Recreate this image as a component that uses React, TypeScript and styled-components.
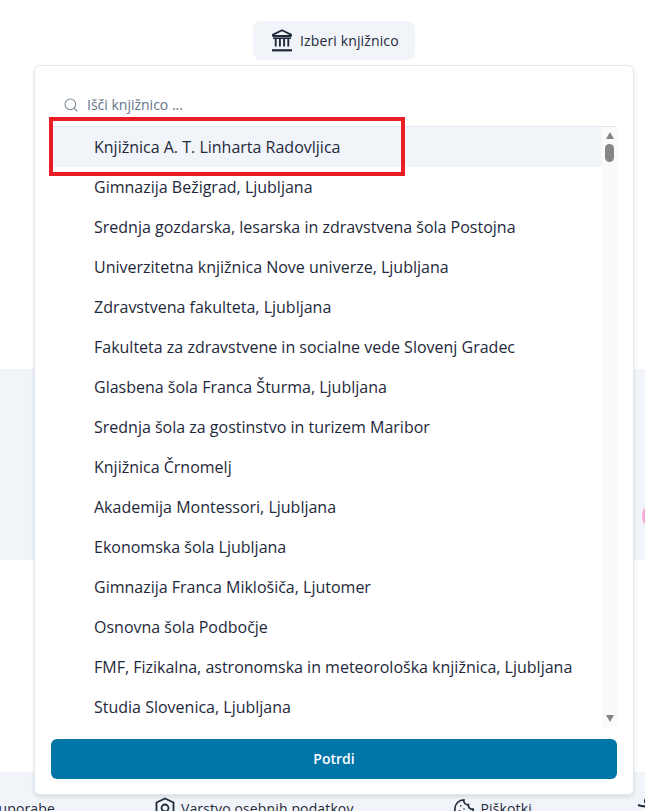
import React from "react";
import styled, { createGlobalStyle } from "styled-components";
import { Search, Cookie } from "lucide-react";

const Global = createGlobalStyle`
  html, body { margin: 0; padding: 0; background: #fff; }
  body { font-family: "Open Sans", "Noto Sans", sans-serif; color: #1e293b; }
`;

const Page = styled.div`
  position: relative;
  width: 645px;
  height: 811px;
  overflow: hidden;
  background: #fff;
  display: flex;
  flex-direction: column;
`;
const Top = styled.div`
  display: flex;
  justify-content: center;
  padding: 21px 0 0 23px;
  height: 369px;
  box-sizing: border-box;
  flex: none;
`;
const LibraryButton = styled.button`
  display: flex;
  align-items: center;
  gap: 8px;
  width: 162px;
  height: 39px;
  padding: 0 0 0 19px;
  border: 0;
  border-radius: 8px;
  background: #f1f5f9;
  color: #1e293b;
  font: 400 14px "Open Sans", "Noto Sans", sans-serif;
  letter-spacing: 0.13px;
`;
const Band = styled.div`
  height: 191px;
  background: #f1f5f9;
  flex: none;
`;
const Spacer = styled.div`
  flex: 1;
`;
const Footer = styled.div`
  height: 39px;
  background: #f1f5f9;
  display: flex;
  gap: 100px;
  padding-top: 26px;
  box-sizing: border-box;
  font-size: 14px;
  letter-spacing: 0.13px;
  white-space: nowrap;
  overflow: hidden;
  flex: none;
`;
const FooterItem = styled.div<{ $offset?: number }>`
  display: flex;
  align-items: center;
  gap: 6px;
  height: 21px;
  flex: none;
  margin-left: ${(p) => p.$offset ?? 0}px;
  color: #1e293b;
`;
const Panel = styled.div`
  position: absolute;
  left: 34px;
  top: 65px;
  width: 600px;
  height: 730px;
  box-sizing: border-box;
  background: #fff;
  border: 1px solid #e2e8f0;
  border-radius: 6px;
  box-shadow: 0 2px 4px rgba(15, 23, 42, 0.12);
  padding: 0 16px 15px;
  display: flex;
  flex-direction: column;
`;
const SearchRow = styled.div`
  display: flex;
  align-items: center;
  gap: 8px;
  height: 61px;
  padding: 17px 0 0 12px;
  box-sizing: border-box;
  color: #64748b;
  font-size: 14px;
  border-bottom: 1px solid #e2e8f0;
  flex: none;
`;
const ListWrap = styled.div`
  display: flex;
  height: 600px;
  flex: none;
`;
const List = styled.ul`
  list-style: none;
  margin: 0;
  padding: 0;
  flex: 1;
  min-width: 0;
  overflow: hidden;
`;
const Item = styled.li<{ $active?: boolean }>`
  height: 40px;
  display: flex;
  align-items: center;
  padding-left: 43px;
  font-size: 16px;
  color: #1e293b;
  white-space: nowrap;
  border-radius: 4px;
  background: ${(p) => (p.$active ? "#f1f5f9" : "transparent")};
`;
const Track = styled.div`
  width: 15px;
  background: #fafafa;
  display: flex;
  flex-direction: column;
  align-items: center;
  flex: none;
  padding-top: 5px;
  box-sizing: border-box;
`;
const ArrowUp = styled.div`
  width: 0;
  height: 0;
  border-left: 4.5px solid transparent;
  border-right: 4.5px solid transparent;
  border-bottom: 7px solid #858585;
`;
const ArrowDown = styled(ArrowUp)`
  border-bottom: 0;
  border-top: 7px solid #858585;
  margin-top: auto;
  margin-bottom: 5px;
`;
const Thumb = styled.div`
  width: 9px;
  height: 18px;
  margin-top: 5px;
  background: #858585;
  border-radius: 5px;
`;
const Confirm = styled.button`
  margin-top: 12px;
  height: 40px;
  width: 100%;
  flex: none;
  border: 0;
  border-radius: 6px;
  padding: 0 0 2px;
  background: #0076a8;
  color: #fff;
  font: 600 14px "Open Sans", "Noto Sans", sans-serif;
`;
const Highlight = styled.div`
  position: absolute;
  left: 49px;
  top: 117px;
  width: 356px;
  height: 59px;
  box-sizing: border-box;
  border: 4px solid #ea1c24;
  pointer-events: none;
`;
const PinkDot = styled.div`
  position: absolute;
  left: 642px;
  top: 502px;
  width: 28px;
  height: 28px;
  border-radius: 50%;
  background: #f9a8d4;
`;

const LibraryIcon = () => (
  <svg width="20" height="23" viewBox="0 0 20 23" fill="none" stroke="#1e293b">
    <path d="M10 1.2 1 5.6v1.4h18V5.6z" strokeWidth="1.8" strokeLinejoin="round" />
    <path d="M1 9.2h18" strokeWidth="1.6" />
    <path d="M3.7 10v7.5M7.9 10v7.5M12.1 10v7.5M16.3 10v7.5" strokeWidth="1.9" />
    <path d="M0 21.3h20" strokeWidth="2.2" />
  </svg>
);

const PrivacyIcon = () => (
  <svg width="20" height="24" viewBox="0 0 20 24" fill="none" stroke="#1e293b" strokeWidth="1.8">
    <path d="M10 1.5 18.5 5.5v9l-8.5 6-8.5-6v-9z" strokeLinejoin="round" />
    <circle cx="10" cy="11" r="3.5" />
  </svg>
);

const AccessIcon = () => (
  <svg width="22" height="24" viewBox="0 0 22 24" fill="none" stroke="#1e293b" strokeWidth="2.2">
    <circle cx="11" cy="4" r="2" fill="#1e293b" />
    <path d="M2 8c6 2 12 2 18 0M11 10v5M11 15l-4 7M11 15l4 7" />
  </svg>
);

const libraries = [
  "Knjižnica A. T. Linharta Radovljica",
  "Gimnazija Bežigrad, Ljubljana",
  "Srednja gozdarska, lesarska in zdravstvena šola Postojna",
  "Univerzitetna knjižnica Nove univerze, Ljubljana",
  "Zdravstvena fakulteta, Ljubljana",
  "Fakulteta za zdravstvene in socialne vede Slovenj Gradec",
  "Glasbena šola Franca Šturma, Ljubljana",
  "Srednja šola za gostinstvo in turizem Maribor",
  "Knjižnica Črnomelj",
  "Akademija Montessori, Ljubljana",
  "Ekonomska šola Ljubljana",
  "Gimnazija Franca Miklošiča, Ljutomer",
  "Osnovna šola Podbočje",
  "FMF, Fizikalna, astronomska in meteorološka knjižnica, Ljubljana",
  "Studia Slovenica, Ljubljana",
];

export default function App() {
  return (
    <Page>
      <Global />
      <Top>
        <LibraryButton>
          <LibraryIcon />
          Izberi knjižnico
        </LibraryButton>
      </Top>
      <Band />
      <Spacer />
      <Footer>
        <FooterItem $offset={-46}>Pogoji uporabe</FooterItem>
        <FooterItem>
          <PrivacyIcon />
          Varstvo osebnih podatkov
        </FooterItem>
        <FooterItem $offset={-1}>
          <Cookie size={22} strokeWidth={1.8} />
          Piškotki
        </FooterItem>
        <FooterItem $offset={4}>
          <AccessIcon />
          Dostopnost
        </FooterItem>
      </Footer>
      <PinkDot />
      <Panel>
        <SearchRow>
          <Search size={16} strokeWidth={1.6} color="#7c8a9c" />
          Išči knjižnico ...
        </SearchRow>
        <ListWrap>
          <List>
            {libraries.map((name, i) => (
              <Item key={name} $active={i === 0}>
                {name}
              </Item>
            ))}
          </List>
          <Track>
            <ArrowUp />
            <Thumb />
            <ArrowDown />
          </Track>
        </ListWrap>
        <Confirm>Potrdi</Confirm>
      </Panel>
      <Highlight />
    </Page>
  );
}
